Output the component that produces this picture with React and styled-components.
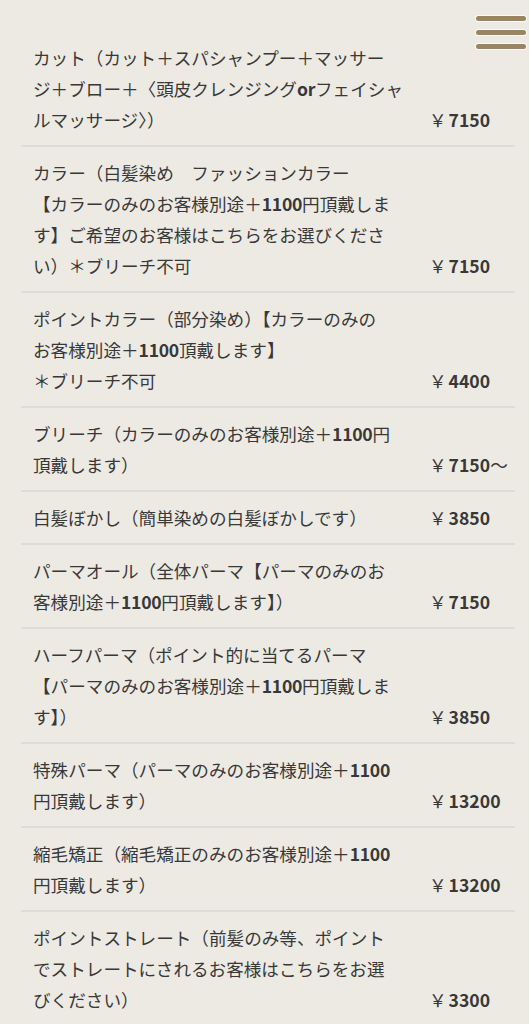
import React from "react";
import styled, { createGlobalStyle } from "styled-components";

const GlobalStyle = createGlobalStyle`
  body {
    margin: 0;
    background: #edeae4;
    font-family: "Noto Sans CJK JP", "Noto Sans", sans-serif;
    color: #383838;
  }
`;

const Page = styled.div`
  position: relative;
  min-height: 100vh;
  background: #edeae4;
`;

const Burger = styled.button`
  position: absolute;
  top: 16px;
  right: 3px;
  display: flex;
  flex-direction: column;
  gap: 9px;
  padding: 0;
  border: 0;
  background: none;
`;

const Bar = styled.span`
  display: block;
  width: 50px;
  height: 5px;
  border-radius: 3px;
  background: #9a8560;
  box-shadow: 0 0 0 1px #fbfaf7;
`;

const List = styled.ul`
  list-style: none;
  margin: 0 14px 0 21px;
  padding: 32px 0 0;
`;

const Row = styled.li`
  display: flex;
  align-items: flex-end;
  padding: 10px 0 10px 12px;
  border-bottom: 2px solid #dcdcd9;
  font-size: 17.6px;
  line-height: 31px;
`;

const Name = styled.div`
  width: 396px;
  flex-shrink: 0;
  white-space: nowrap;
`;

const Latin = styled.span`
  font-weight: 700;
  letter-spacing: -0.3px;
`;

const Price = styled.div`
  flex: 1;
  white-space: nowrap;
`;

const Yen = styled.span`
  margin-right: 2px;
`;

const Digits = styled.span`
  font-weight: 700;
`;

const items = [
  {
    lines: [
      "カット（カット＋スパシャンプー＋マッサー",
      "ジ＋ブロー＋〈頭皮クレンジングorフェイシャ",
      "ルマッサージ〉）",
    ],
    price: "7150",
  },
  {
    lines: [
      "カラー（白髪染め　ファッションカラー",
      "【カラーのみのお客様別途＋1100円頂戴しま",
      "す】ご希望のお客様はこちらをお選びくださ",
      "い）＊ブリーチ不可",
    ],
    price: "7150",
  },
  {
    lines: [
      "ポイントカラー（部分染め）【カラーのみの",
      "お客様別途＋1100頂戴します】",
      "＊ブリーチ不可",
    ],
    price: "4400",
  },
  {
    lines: ["ブリーチ（カラーのみのお客様別途＋1100円", "頂戴します）"],
    price: "7150",
    suffix: "～",
  },
  { lines: ["白髪ぼかし（簡単染めの白髪ぼかしです）"], price: "3850" },
  {
    lines: ["パーマオール（全体パーマ【パーマのみのお", "客様別途＋1100円頂戴します】）"],
    price: "7150",
  },
  {
    lines: [
      "ハーフパーマ（ポイント的に当てるパーマ",
      "【パーマのみのお客様別途＋1100円頂戴しま",
      "す】）",
    ],
    price: "3850",
  },
  {
    lines: ["特殊パーマ（パーマのみのお客様別途＋1100", "円頂戴します）"],
    price: "13200",
  },
  {
    lines: ["縮毛矯正（縮毛矯正のみのお客様別途＋1100", "円頂戴します）"],
    price: "13200",
  },
  {
    lines: [
      "ポイントストレート（前髪のみ等、ポイント",
      "でストレートにされるお客様はこちらをお選",
      "びください）",
    ],
    price: "3300",
  },
];

// latin runs (1100, or) come out heavier in the original font
function renderLine(line) {
  return line
    .split(/([0-9A-Za-z]+)/)
    .map((part, i) =>
      /^[0-9A-Za-z]+$/.test(part) ? <Latin key={i}>{part}</Latin> : part
    );
}

export default function App() {
  return (
    <Page>
      <GlobalStyle />
      <List>
        {items.map((item, idx) => (
          <Row key={idx}>
            <Name>
              {item.lines.map((line, i) => (
                <React.Fragment key={i}>
                  {i > 0 && <br />}
                  {renderLine(line)}
                </React.Fragment>
              ))}
            </Name>
            <Price>
              <Yen>￥</Yen>
              <Digits>{item.price}</Digits>
              {item.suffix}
            </Price>
          </Row>
        ))}
      </List>
      <Burger aria-label="menu">
        <Bar />
        <Bar />
        <Bar />
      </Burger>
    </Page>
  );
}
